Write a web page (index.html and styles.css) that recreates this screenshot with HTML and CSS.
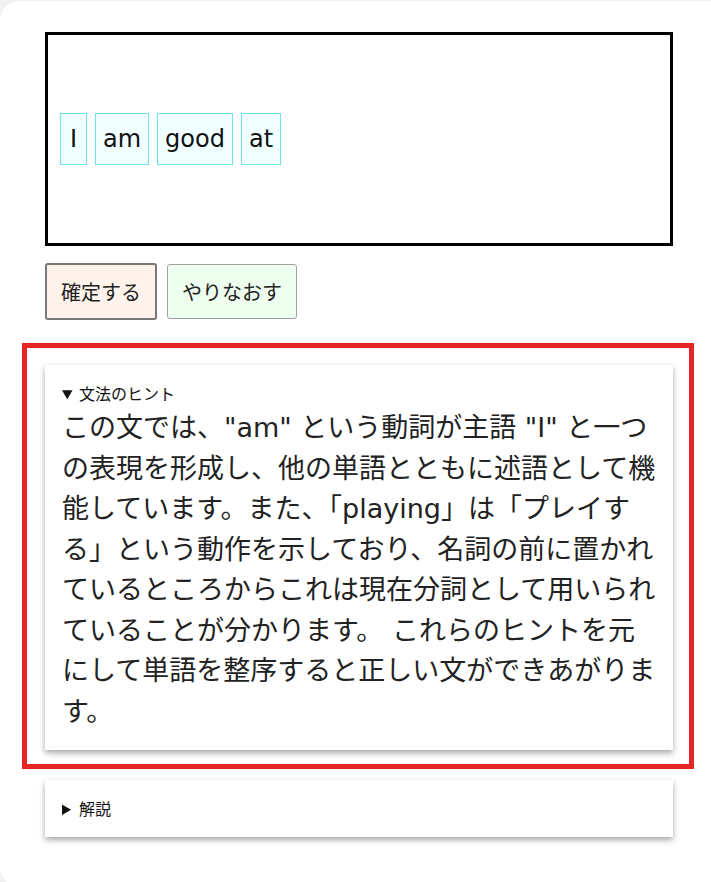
FILE: index.html
```html
<!DOCTYPE html>
<html lang="ja">
<head>
<meta charset="utf-8">
<title>並べ替え問題</title>
<link rel="stylesheet" href="styles.css">
</head>
<body>
<div class="page">
  <div class="answer-box">
    <span class="tile">I</span>
    <span class="tile">am</span>
    <span class="tile">good</span>
    <span class="tile">at</span>
  </div>
  <div class="actions">
    <button class="btn btn-confirm">確定する</button>
    <button class="btn btn-reset">やりなおす</button>
  </div>
  <div class="highlight">
    <details class="card" open>
      <summary>文法のヒント</summary>
      <p class="hint-text">この文では、"am" という動詞が主語 "I" と一つの表現を形成し、他の単語とともに述語として機能しています。また、「playing」は「プレイする」という動作を示しており、名詞の前に置かれているところからこれは現在分詞として用いられていることが分かります。 これらのヒントを元にして単語を整序すると正しい文ができあがります。</p>
    </details>
  </div>
  <details class="card card-closed">
    <summary>解説</summary>
  </details>
</div>
</body>
</html>
```
FILE: styles.css
```css
html, body {
  margin: 0;
  padding: 0;
  overflow: hidden;
}
body {
  background: #f1f1f1;
  font-family: "DejaVu Sans", "Noto Sans CJK JP", sans-serif;
  color: #222;
}
.page {
  box-sizing: border-box;
  margin-top: 1px;
  height: 886px;
  background: #fff;
  border-radius: 20px 0 0 20px;
  padding: 31px 0 0 45px;
}
.page > * {
  width: 628px;
  box-sizing: border-box;
}
.answer-box {
  height: 214px;
  border: 3px solid #000;
  padding: 0 8px;
  display: flex;
  align-items: center;
  flex-wrap: wrap;
}
.tile {
  margin: 0 4px;
  height: 52px;
  min-width: 27px;
  text-align: center;
  box-sizing: border-box;
  line-height: 50px;
  padding: 0 7px;
  font-size: 24px;
  background: #f0ffff;
  border: 1px solid #72e4ec;
  color: #111;
}
.actions {
  margin-top: 17px;
  display: flex;
  align-items: center;
  gap: 10px;
}
.btn {
  font-family: "Noto Sans CJK JP", sans-serif;
  font-size: 20px;
  color: #222;
  border-radius: 3px;
  padding: 0 14px;
  box-sizing: border-box;
}
.btn-confirm {
  height: 57px;
  background: #fff3ec;
  border: 2px solid #777;
}
.btn-reset {
  height: 55px;
  background: #efffef;
  border: 1px solid #a0a0a0;
}
.highlight {
  margin-top: 23px;
  margin-left: -23px;
  width: 672px !important;
  border: 5px solid #e52424;
  padding: 17px 16px 14px 18px;
}
.card {
  background: #fff;
  box-shadow: 0 3px 6px rgba(0, 0, 0, 0.35);
  padding: 16px 16px 18px 17px;
  box-sizing: border-box;
}
.card summary {
  font-family: "Noto Sans CJK JP", sans-serif;
  font-size: 16px;
  line-height: 25px;
  margin-bottom: 2px;
  color: #111;
  cursor: pointer;
}
.hint-text {
  margin: 0;
  font-size: 27px;
  line-height: 40.5px;
  color: #222;
}
.card-closed {
  margin-top: 11px;
  padding: 16px 17px;
}
.card-closed summary {
  margin-bottom: 0;
}
```
